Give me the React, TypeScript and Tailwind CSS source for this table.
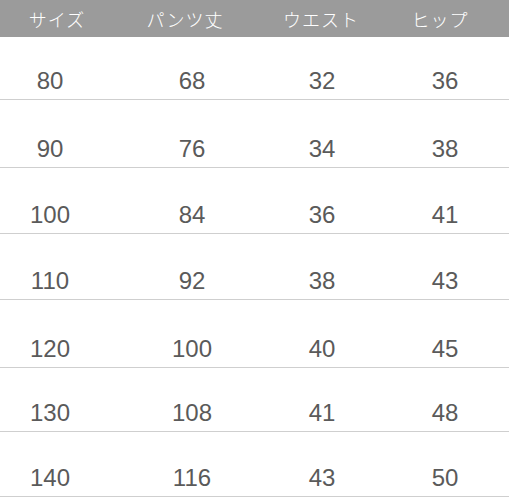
const headers = [
  { label: 'サイズ', ml: 'ml-[17px]' },
  { label: 'パンツ丈', ml: 'ml-[48px]' },
  { label: 'ウエスト', ml: 'ml-[56px]' },
  { label: 'ヒップ', ml: 'ml-[39px]' },
];

const rows = [
  { h: 'h-[63px]', cells: ['80', '68', '32', '36'] },
  { h: 'h-[68px]', cells: ['90', '76', '34', '38'] },
  { h: 'h-[66px]', cells: ['100', '84', '36', '41'] },
  { h: 'h-[66px]', cells: ['110', '92', '38', '43'] },
  { h: 'h-[68px]', cells: ['120', '100', '40', '45'] },
  { h: 'h-[64px]', cells: ['130', '108', '41', '48'] },
  { h: 'h-[65px]', cells: ['140', '116', '43', '50'] },
];

const cellMargins = ['ml-[20px]', 'ml-[82px]', 'ml-[70px]', 'ml-[63px]'];

export default function App() {
  return (
    <div className="w-[509px] h-[497px] overflow-hidden bg-white">
      {/* header bar */}
      <div className="h-[37px] bg-[#9b9b9b] flex items-center">
        {headers.map((c) => (
          <div
            key={c.label}
            className={`${c.ml} w-[80px] text-center text-[18px] leading-none tracking-[1px] font-light text-white font-['Noto_Sans_CJK_JP',sans-serif]`}
          >
            {c.label}
          </div>
        ))}
      </div>

      {/* size rows */}
      {rows.map((r) => (
        <div key={r.cells[0]} className={`${r.h} flex items-end pb-[6px] border-b border-[#cfcfcf]`}>
          {r.cells.map((v, i) => (
            <div
              key={i}
              className={`${cellMargins[i]} w-[60px] text-center text-[24px] leading-[24px] text-[#5a5a5a] font-['Liberation_Sans',Arial,sans-serif]`}
            >
              {v}
            </div>
          ))}
        </div>
      ))}
    </div>
  );
}
